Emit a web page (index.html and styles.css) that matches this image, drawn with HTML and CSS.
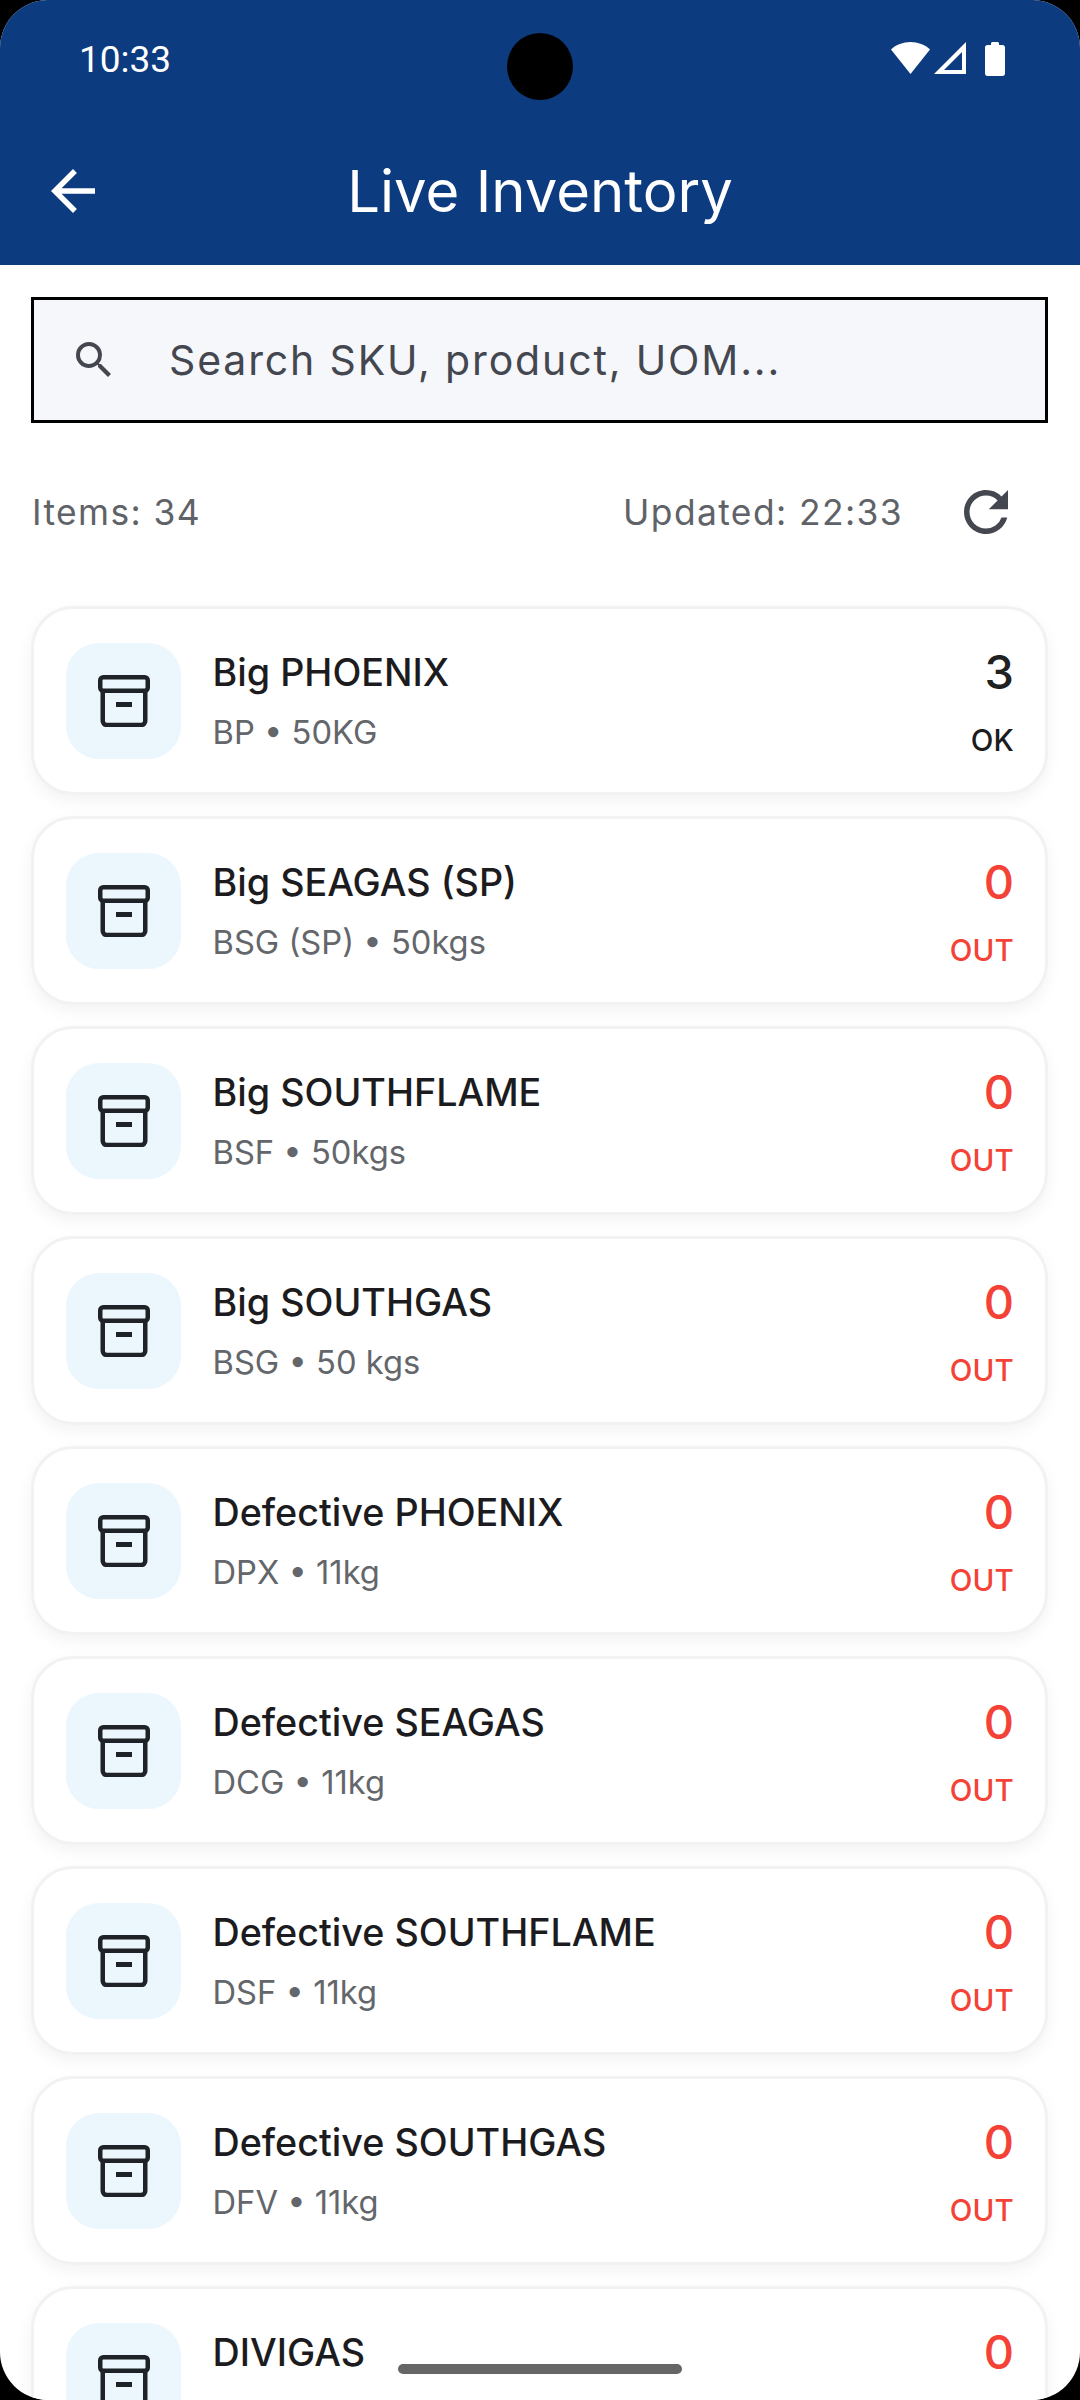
FILE: index.html
```html
<!DOCTYPE html>
<html lang="en">
<head>
<meta charset="utf-8">
<title>Live Inventory</title>
<link rel="stylesheet" href="styles.css">
</head>
<body>
<svg class="defs" width="0" height="0" aria-hidden="true">
  <symbol id="box" viewBox="0 0 52 52">
    <rect x="2.250" y="2.250" width="47.500" height="13.500" rx="3" fill="none" stroke="currentColor" stroke-width="4.500"/>
    <path d="M4.750 16V46a4 4 0 0 0 4 4H43.250a4 4 0 0 0 4-4V16" fill="none" stroke="currentColor" stroke-width="4.500"/>
    <rect x="18" y="27" width="16" height="5" fill="currentColor"/>
  </symbol>
</svg>
<div class="phone">
  <header class="appbar">
    <div class="status">
      <span class="time">10:33</span>
      <div class="status-icons">
        <svg class="wifi" viewBox="0 0 39 32"><path d="M0 7.500C5 2.800 12 0 19.500 0S34 2.800 39 7.500L19.500 32z" fill="#fff"/></svg>
        <svg class="signal" viewBox="0 0 32 32"><path d="M32 0V32H0zM28 10 10 28H28z" fill="#fff" fill-rule="evenodd"/></svg>
        <svg class="battery" viewBox="0 0 20 34"><path d="M6 3V1.500C6 .7 6.700 0 7.500 0h5c.8 0 1.500.7 1.500 1.500V3h3.500C19 3 20 4 20 5.500V31.500C20 33 19 34 17.500 34h-15C1 34 0 33 0 31.500V5.500C0 4 1 3 2.500 3z" fill="#fff"/></svg>
      </div>
    </div>
    <div class="toolbar">
      <svg class="back" viewBox="0 0 24 24"><path d="M20 11H7.830l5.590-5.590L12 4l-8 8 8 8 1.410-1.410L7.830 13H20z" fill="#fff"/></svg>
      <h1 class="title">Live Inventory</h1>
    </div>
  </header>
  <main class="content">
    <div class="search">
      <svg class="search-icon" viewBox="0 0 24 24"><path d="M15.500 14h-.79l-.28-.27A6.470 6.470 0 0 0 16 9.500 6.500 6.500 0 1 0 9.500 16c1.610 0 3.090-.59 4.230-1.570l.27.28v.79l5 4.990L20.490 19l-4.990-5zm-6 0C7.010 14 5 11.990 5 9.500S7.010 5 9.500 5 14 7.010 14 9.500 11.990 14 9.500 14z"/></svg>
      <span class="placeholder">Search SKU, product, UOM...</span>
    </div>
    <div class="meta">
      <span>Items: 34</span>
      <span class="updated">Updated: 22:33</span>
      <svg class="refresh" viewBox="0 0 24 24"><path d="M17.650 6.350A7.958 7.958 0 0 0 12 4c-4.420 0-7.990 3.580-7.990 8s3.570 8 7.990 8c3.730 0 6.840-2.550 7.730-6h-2.080A5.990 5.990 0 0 1 12 18c-3.310 0-6-2.690-6-6s2.690-6 6-6c1.660 0 3.140.69 4.220 1.780L13 11h7V4l-2.350 2.350z"/></svg>
    </div>
    <div class="list">
      <article class="card">
        <div class="tile"><svg class="box"><use href="#box"/></svg></div>
        <div class="info"><div class="name">Big PHOENIX</div><div class="sub">BP • 50KG</div></div>
        <div class="stock"><div class="qty">3</div><div class="state">OK</div></div>
      </article>
      <article class="card">
        <div class="tile"><svg class="box"><use href="#box"/></svg></div>
        <div class="info"><div class="name">Big SEAGAS (SP)</div><div class="sub">BSG (SP) • 50kgs</div></div>
        <div class="stock out"><div class="qty">0</div><div class="state">OUT</div></div>
      </article>
      <article class="card">
        <div class="tile"><svg class="box"><use href="#box"/></svg></div>
        <div class="info"><div class="name">Big SOUTHFLAME</div><div class="sub">BSF • 50kgs</div></div>
        <div class="stock out"><div class="qty">0</div><div class="state">OUT</div></div>
      </article>
      <article class="card">
        <div class="tile"><svg class="box"><use href="#box"/></svg></div>
        <div class="info"><div class="name">Big SOUTHGAS</div><div class="sub">BSG • 50 kgs</div></div>
        <div class="stock out"><div class="qty">0</div><div class="state">OUT</div></div>
      </article>
      <article class="card">
        <div class="tile"><svg class="box"><use href="#box"/></svg></div>
        <div class="info"><div class="name">Defective PHOENIX</div><div class="sub">DPX • 11kg</div></div>
        <div class="stock out"><div class="qty">0</div><div class="state">OUT</div></div>
      </article>
      <article class="card">
        <div class="tile"><svg class="box"><use href="#box"/></svg></div>
        <div class="info"><div class="name">Defective SEAGAS</div><div class="sub">DCG • 11kg</div></div>
        <div class="stock out"><div class="qty">0</div><div class="state">OUT</div></div>
      </article>
      <article class="card">
        <div class="tile"><svg class="box"><use href="#box"/></svg></div>
        <div class="info"><div class="name">Defective SOUTHFLAME</div><div class="sub">DSF • 11kg</div></div>
        <div class="stock out"><div class="qty">0</div><div class="state">OUT</div></div>
      </article>
      <article class="card">
        <div class="tile"><svg class="box"><use href="#box"/></svg></div>
        <div class="info"><div class="name">Defective SOUTHGAS</div><div class="sub">DFV • 11kg</div></div>
        <div class="stock out"><div class="qty">0</div><div class="state">OUT</div></div>
      </article>
      <article class="card">
        <div class="tile"><svg class="box"><use href="#box"/></svg></div>
        <div class="info"><div class="name">DIVIGAS</div></div>
        <div class="stock out"><div class="qty">0</div></div>
      </article>
    </div>
  </main>
  <div class="camera"></div>
  <div class="home-bar"></div>
</div>
</body>
</html>
```

FILE: styles.css
```css
* { box-sizing: border-box; }
html, body { margin: 0; padding: 0; background: #000; }
body { font-family: Inter, "Liberation Sans", sans-serif; }
.defs { position: absolute; }
.phone {
  position: relative;
  width: 1080px;
  height: 2400px;
  overflow: hidden;
  border-radius: 48px;
  background: #fff;
}
.appbar { background: #0d3b7f; height: 265px; color: #fff; }
.status {
  height: 116px;
  padding: 0 75px 0 79px;
  display: flex;
  align-items: flex-start;
  justify-content: space-between;
}
.time {
  font-family: Roboto, sans-serif;
  font-size: 37px;
  line-height: 42px;
  margin-top: 39px;
}
.status-icons { display: flex; align-items: flex-start; margin-top: 42px; }
.wifi { width: 39px; height: 32px; }
.signal { width: 32px; height: 32px; margin-left: 4px; }
.battery { width: 20px; height: 34px; margin-left: 19px; }
.toolbar { position: relative; height: 149px; display: flex; align-items: center; justify-content: center; }
.back { position: absolute; left: 40px; top: 42px; width: 66px; height: 66px; }
.title { margin: 0; font-size: 58px; font-weight: 400; line-height: 66px; }
.content { padding: 32px 32px 0 31px; }
.search {
  height: 126px;
  border: 3px solid #000;
  background: #f5f7fb;
  display: flex;
  align-items: center;
  padding-left: 36px;
}
.search-icon { width: 48px; height: 48px; fill: #44474f; flex: none; }
.placeholder { margin-left: 51px; font-size: 41px; letter-spacing: 1.85px; color: #44474f; line-height: 50px; }
.meta {
  height: 66px;
  margin-top: 56px;
  display: flex;
  align-items: center;
  font-size: 35.400px;
  letter-spacing: 1.4px;
  color: #5f6368;
  padding-left: 1px;
}
.updated { margin-left: auto; }
.refresh { width: 66px; height: 66px; fill: #44474f; margin-left: 50px; margin-right: 29px; flex: none; }
.list { margin-top: 61px; display: flex; flex-direction: column; gap: 21px; }
.card {
  height: 189px;
  flex: none;
  display: flex;
  align-items: flex-start;
  padding: 0 31px 0 32px;
  background: #fff;
  border: 3px solid #f1f2f3;
  border-radius: 42px;
  box-shadow: 0 6px 16px rgba(0, 0, 0, 0.05);
}
.tile {
  width: 115px;
  height: 116px;
  border-radius: 33px;
  background: #ebf6fd;
  display: flex;
  align-items: center;
  justify-content: center;
  flex: none;
  margin-top: 34px;
}
.box { width: 52px; height: 52px; color: #1f2328; }
.info { flex: 1; margin-left: 31.500px; margin-top: 41px; min-width: 0; }
.name { font-size: 37.700px; font-weight: 500; line-height: 44px; color: #1c1c20; }
.sub { font-size: 32.700px; line-height: 40px; margin-top: 17.500px; color: #63666a; }
.stock { text-align: right; margin-top: 35px; }
.qty { font-size: 47px; font-weight: 500; line-height: 56px; color: #1f2123; }
.state { font-size: 29.500px; font-weight: 500; line-height: 36px; margin-top: 22px; color: #1c1c20; letter-spacing: .2px; }
.out .qty, .out .state { color: #f44336; }
.camera {
  position: absolute;
  left: 507px;
  top: 33px;
  width: 66px;
  height: 67px;
  border-radius: 50%;
  background: #000;
}
.home-bar {
  position: absolute;
  left: 398px;
  top: 2364px;
  width: 284px;
  height: 10px;
  border-radius: 5px;
  background: #666;
}
```
